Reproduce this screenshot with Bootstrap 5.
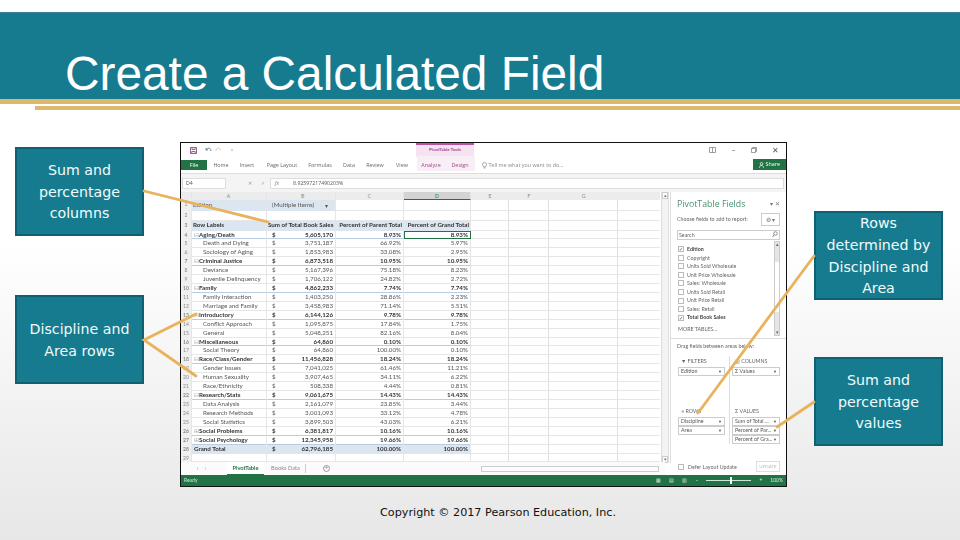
<!DOCTYPE html>
<html lang="en"><head><meta charset="utf-8"><title>Create a Calculated Field</title>
<link href="https://cdn.jsdelivr.net/npm/bootstrap@5.3.0/dist/css/bootstrap.min.css" rel="stylesheet">
<style>
html,body{margin:0;height:540px;width:960px;overflow:hidden}
.slide{position:relative;width:960px;height:540px;background:linear-gradient(#fff 0,#fff 45%,#e7e7e7 100%);padding-top:12px}
.hdr{height:87px;background:#177b90;border-top:1px solid #3f7f98;padding-left:65px;display:flex;align-items:flex-end}
.hdr h1{font:400 47.8px/54px "Liberation Sans",sans-serif;color:#fff;margin:0 0 -2px;letter-spacing:0}
.gold1{height:5px;background:#dcb86c}
.gold2{height:4px;background:#dcb86c;margin:2px 0 0 35px}
.note{position:absolute;width:129px;background:#177b90;border:2px solid #106073;font:14.2px/21.6px "DejaVu Sans",sans-serif;text-align:center;display:flex;align-items:center;justify-content:center;color:#f1fbfb;height:89px;padding-top:2px}
.n1{left:15px;top:147px}.n2{left:15px;top:295px}.n3{left:814px;top:211px}.n4{left:814px;top:357px}
.wires{position:absolute;left:0;top:0;z-index:3;pointer-events:none}
.copy{position:absolute;left:0;width:996px;top:506px;text-align:center;font:11.2px/14px "DejaVu Sans",sans-serif;color:#111}
.xl{position:absolute;left:180px;top:142px;width:607px;height:345px;background:#fff;border:1.5px solid #111;display:flex;flex-direction:column;font-family:Lato,sans-serif;color:#555;overflow:hidden}
.xl>*{filter:blur(.45px)}
.xtop{height:14px;display:flex;align-items:center;flex:none}
.qa{width:235px;padding-left:9px;display:flex;gap:8px;align-items:center}
.tools{width:58px;height:14px;background:#f5e3f1;border-top:2px solid #b9529f;font-size:4.5px;color:#a04a8c;text-align:center;line-height:10px;font-weight:700}
.wc{margin-left:auto;display:flex;gap:15px;padding-right:7px;align-items:center;font-size:8px;line-height:8px;color:#555}
.xtabs{height:15px;display:flex;align-items:center;font:5.4px/10px "Open Sans",sans-serif;color:#666;flex:none;position:relative}
.xfile{width:26px;height:10px;background:#217346;color:#fff;text-align:center}
.xtabs>span{flex:none;text-align:center}
.tpink{background:#f8eef6;height:15px;line-height:13px;color:#a04a8c;margin-top:-3px;padding-top:3px}
.xshare{margin-left:auto;width:33px;height:11px;background:#217346;color:#fff;line-height:11px}
.xfx{height:19px;flex:none;background:#f4f4f4;border-top:1px solid #ddd;display:flex;align-items:center;font:5.2px/9px "Open Sans",sans-serif;padding:0 2px 0 1px;margin-top:1px}
.xfx .nm{width:44px;height:11px;background:#fff;border:1px solid #ddd;padding-left:3px;line-height:9px}
.xfx .sym{width:44px;padding-left:22px;color:#999;white-space:nowrap;display:flex;gap:9px}
.xfx .val{flex:1;height:11px;background:#fff;border:1px solid #ddd;padding-left:23px;line-height:9px}
.xfx .val em{margin:0 14px 0 -19px;color:#777}
.xmain{flex:1;display:flex;min-height:0}
.xgrid{width:479px;flex:none;display:flex;flex-direction:column;background:linear-gradient(#e0e0e0,#e0e0e0) 327px 0/1px 100% no-repeat,linear-gradient(#e0e0e0,#e0e0e0) 367px 0/1px 100% no-repeat,linear-gradient(#e0e0e0,#e0e0e0) 436px 0/1px 100% no-repeat}
.xrow{display:grid;grid-template-columns:11px 75px 69px 68px 67px 1fr;height:8.93px;font-size:6.2px;line-height:8.4px;color:#555;flex:none;white-space:nowrap;background-image:linear-gradient(#e6e6e6,#e6e6e6);background-size:100% 1px;background-position:0 100%;background-repeat:no-repeat}
.xrow>span{display:block;overflow:hidden;padding:0 2px;text-align:right;border-right:1px solid #e6e6e6}
.xrow>span:nth-child(1){background:#f0f0f0;text-align:center;padding:0;color:#888;font-size:5px}
.xrow>span:nth-child(2){text-align:left;padding-left:1px}
.xrow>span:nth-child(3){display:flex;justify-content:space-between;padding:0 2px 0 5px}
.xrow>span:nth-child(6){border:0}
.xrow.top{background:#f3f3f3;height:8px;text-align:center;color:#888;font-size:5px}
.xrow.top>span{text-align:center!important;display:block!important;background:#ececec;line-height:8px}
.xrow.top>.cur{background:#d3d3d3;border-bottom:1px solid #217346;color:#217346}
.xrow.bd{font-weight:700;color:#333;background-image:linear-gradient(#b8cce4,#b8cce4),linear-gradient(#e6e6e6,#e6e6e6);background-size:290px 1px,100% 1px}
.xrow.bd>span:nth-child(2){padding-left:2px}
.tg{color:#aaa;font-weight:400}
.xrow .ind{padding-left:11px!important}
.xrow.bl>span:nth-child(n+2):nth-child(-n+5){background:#dce6f1}
.xrow.pg>span:nth-child(2),.xrow.pg>span:nth-child(3){background:#dce6f1}
.xrow.tall{height:10.500px;line-height:9.500px}
.xrow.sel>span:nth-child(5){outline:1px solid #217346;outline-offset:-1px}
.xrow.hd{font-weight:700;color:#333;height:9.5px}
.xrow.hd>span:nth-child(n+3){display:block;padding:0 1px;text-align:left}
.xrow.hd>span:nth-child(n+4){text-align:right}
.xbar{width:8px;flex:none;background:#f3f3f3;border-left:1px solid #ddd;border-right:1px solid #ddd;margin-left:1px;display:flex;flex-direction:column;justify-content:space-between;font-size:5px;line-height:7px;text-align:center;color:#777}
.xbar i{font-style:normal;display:block;background:#fff;border:1px solid #ccc;height:7px;line-height:5px}
.xpane{width:116px;flex:none;padding:5px 6px 0 6px;border-left:1px solid #ddd;margin-left:1px;font:5.3px/8.5px Lato,sans-serif;color:#666;position:relative;display:flex;flex-direction:column}
.xpane h6{font:400 8.8px/14px "Open Sans",sans-serif;color:#4c9070;margin:0;display:flex;justify-content:space-between;white-space:nowrap}
.xpane h6 small{font-size:6px;color:#777}
.pchoose{display:flex;justify-content:space-between;align-items:center;height:14px;margin-top:2px}
.pgear{width:19px;height:13px;border:1px solid #ccc;text-align:center;line-height:11px;font-size:6px;color:#777}
.psearch{height:10px;border:1px solid #ccc;margin:4px 0 4px 0;padding:0 1px;line-height:8px;display:flex;justify-content:space-between}
.plist{height:92px;display:flex;justify-content:space-between;flex:none;padding-left:1px}
.plist ul{list-style:none;margin:0;padding:1px 0 0;flex:1}
.plist li{height:8.55px;display:flex;align-items:center;gap:3px;white-space:nowrap}
.pbox{display:inline-block;width:6px;height:6px;border:1px solid #bbb;flex:none;font-size:5px;line-height:4px;color:#777}
.plist .act{font-weight:700;color:#444}
.pmore{margin-top:3px}
.pscroll{width:6px;border:1px solid #ccc;display:flex;flex-direction:column;justify-content:space-between;line-height:5px;text-align:center;font-size:5px;background:linear-gradient(#e5e5e5 20px,#fff 20px,#fff 70px,#e5e5e5 70px);margin-top:-3px}
.pdiv{border-top:1px solid #ddd;margin:2px -6px 0;padding:3px 6px 0}
.pareas{display:grid;grid-template-columns:47px 48px;grid-template-rows:50px 1fr;column-gap:7px;height:96px;position:relative;margin:5px 0 0 1px}
.pareas::before{content:"";position:absolute;left:51px;top:0;bottom:0;border-left:1px solid #ddd}
.parea{white-space:nowrap}
.parea>div:first-child{height:11px;line-height:10px;padding-left:3px}
.pitem{height:9.300px;border:1px solid #ccc;padding:0 2px;line-height:7px;display:flex;justify-content:space-between;color:#555}
.pitem i{font-style:normal;font-size:4px}
.pdefer{margin-top:17px;display:flex;align-items:center;gap:4px;height:11px;padding-left:1px}
.pdefer u{margin-left:auto;text-decoration:none;width:24px;height:11px;border:1px solid #ddd;text-align:center;color:#bbb;line-height:9px;font-size:4.5px}
.xsheet{height:13px;flex:none;display:flex;align-items:center;font-size:5.7px;color:#888;margin-top:-1px;width:484px;background:#fbfbfb}
.xsheet .ar{width:46px;padding-left:16px;letter-spacing:6px;font-size:5px}
.xsheet .on{width:37px;text-align:center;font-weight:700;color:#217346;background:#fff;border-bottom:1.5px solid #217346;height:13px;line-height:12px;margin-right:2px}
.xsheet .off{width:40px;text-align:center;border-right:1px solid #ccc}
.xsheet .add{width:7px;height:7px;border:1px solid #999;border-radius:50%;margin-left:17px;text-align:center;line-height:4px;font-size:6px}
.xsheet .hs{margin-left:auto;margin-right:6px;width:178px;height:6px;border:1px solid #ccc;background:#fff}
.xstat{height:11px;flex:none;background:#217346;color:#cfe5d8;font-size:5px;line-height:11px;padding:0 3px;display:flex;align-items:center}
.xstat .rgt{margin-left:auto;display:flex;align-items:center;gap:8px;color:#dfeee6}
.xzoom{width:45px;height:1px;background:#cfe5d8;position:relative;display:block}
.xzoom::after{content:"";position:absolute;left:24px;top:-3px;height:7px;width:1.5px;background:#fff}
</style></head><body>
<div class="slide">
<div class="hdr"><h1>Create a Calculated Field</h1></div>
<div class="gold1"></div><div class="gold2"></div>

<div class="note n1"><span>Sum and<br>percentage<br>columns</span></div>
<div class="note n2"><span>Discipline and<br>Area rows</span></div>
<div class="note n3"><span>Rows<br>determined by<br>Discipline and<br>Area</span></div>
<div class="note n4"><span>Sum and<br>percentage<br>values</span></div>

<div class="xl">
 <div class="xtop">
  <div class="qa"><svg width="7" height="7" viewBox="0 0 7 7"><path d="M.5.5h6v6h-6z M2 .5v2h3v-2 M1.8 6.5v-2h3.4v2" fill="none" stroke="#8a4f82" stroke-width=".9"/></svg>
  <svg width="30" height="6" viewBox="0 0 30 6"><path d="M1 3c2-3 5-2 5 1M1 1v2h2" fill="none" stroke="#3a6f96" stroke-width=".8"/><path d="M16 3c-2-3-5-2-5 1" fill="none" stroke="#bbb" stroke-width=".8"/><circle cx="27" cy="3" r=".8" fill="#999"/></svg></div>
  <div class="tools">PivotTable Tools</div>
  <div class="wc"><svg width="7" height="6" viewBox="0 0 7 6"><path d="M.5.5h6v5h-6zM3.5.5v5" fill="none" stroke="#777" stroke-width=".7"/></svg><span>–</span><svg width="6" height="6" viewBox="0 0 6 6"><path d="M.5 1.5h4v4h-4zM1.5 1.5v-1h4v4h-1" fill="none" stroke="#777" stroke-width=".7"/></svg><span>✕</span></div>
 </div>
 <div class="xtabs">
  <span class="xfile">File</span>
  <span style="width:28px">Home</span><span style="width:24px">Insert</span><span style="width:46px">Page Layout</span><span style="width:30px">Formulas</span><span style="width:28px">Data</span><span style="width:24px">Review</span><span style="width:30px">View</span>
  <span class="tpink" style="width:28px">Analyze</span><span class="tpink" style="width:30px">Design</span>
  <span style="padding-left:7px;color:#888"><svg width="5" height="7" viewBox="0 0 5 7"><path d="M.5 2.500a2 2 0 0 1 4 0c0 1-1 1.300-1 2.500h-2c0-1.200-1-1.500-1-2.500zM1.500 6h2" fill="none" stroke="#888" stroke-width=".7"/></svg> Tell me what you want to do...</span>
  <span class="xshare"><svg width="5" height="6" viewBox="0 0 5 6"><circle cx="2.500" cy="1.800" r="1.300" fill="none" stroke="#fff" stroke-width=".7"/><path d="M.3 5.800c0-3 4.400-3 4.400 0" fill="none" stroke="#fff" stroke-width=".7"/></svg> Share</span>
 </div>
 <div class="xfx"><span class="nm">D4</span><span class="sym"><span>✕</span><span>✓</span></span><span class="val"><em class="fst-italic">fx</em>8.92597217490203%</span></div>
 <div class="xmain">
  <div class="xgrid">
   <div class="xrow top"><span></span><span>A</span><span>B</span><span>C</span><span class="cur">D</span><span style="display:grid!important;grid-template-columns:38px 40px 69px 1fr;padding:0"><b class="fw-normal">E</b><b class="fw-normal">F</b><b class="fw-normal">G</b><b></b></span></div>
   <div class="xrow pg tall"><span>1</span><span>Edition</span><span>(Multiple Items)<em class="fst-normal border px-1">▾</em></span><span></span><span></span><span></span></div>
   <div class="xrow tall"><span>2</span><span></span><span></span><span></span><span></span><span></span></div>
   <div class="xrow hd bl"><span>3</span><span>Row Labels</span><span>Sum of Total Book Sales</span><span>Percent of Parent Total</span><span>Percent of Grand Total</span><span></span></div>
   <div class="xrow bd sel"><span>4</span><span><i class="tg fst-normal">⊟</i>Aging/Death</span><span>$<em class="fst-normal">5,605,170</em></span><span>8.93%</span><span>8.93%</span><span></span></div>
   <div class="xrow"><span>5</span><span class="ind">Death and Dying</span><span>$<em class="fst-normal">3,751,187</em></span><span>66.92%</span><span>5.97%</span><span></span></div>
   <div class="xrow"><span>6</span><span class="ind">Sociology of Aging</span><span>$<em class="fst-normal">1,853,983</em></span><span>33.08%</span><span>2.95%</span><span></span></div>
   <div class="xrow bd"><span>7</span><span><i class="tg fst-normal">⊟</i>Criminal Justice</span><span>$<em class="fst-normal">6,873,518</em></span><span>10.95%</span><span>10.95%</span><span></span></div>
   <div class="xrow"><span>8</span><span class="ind">Deviance</span><span>$<em class="fst-normal">5,167,396</em></span><span>75.18%</span><span>8.23%</span><span></span></div>
   <div class="xrow"><span>9</span><span class="ind">Juvenile Delinquency</span><span>$<em class="fst-normal">1,706,122</em></span><span>24.82%</span><span>2.72%</span><span></span></div>
   <div class="xrow bd"><span>10</span><span><i class="tg fst-normal">⊟</i>Family</span><span>$<em class="fst-normal">4,862,233</em></span><span>7.74%</span><span>7.74%</span><span></span></div>
   <div class="xrow"><span>11</span><span class="ind">Family Interaction</span><span>$<em class="fst-normal">1,403,250</em></span><span>28.86%</span><span>2.23%</span><span></span></div>
   <div class="xrow"><span>12</span><span class="ind">Marriage and Family</span><span>$<em class="fst-normal">3,458,983</em></span><span>71.14%</span><span>5.51%</span><span></span></div>
   <div class="xrow bd"><span>13</span><span><i class="tg fst-normal">⊟</i>Introductory</span><span>$<em class="fst-normal">6,144,126</em></span><span>9.78%</span><span>9.78%</span><span></span></div>
   <div class="xrow"><span>14</span><span class="ind">Conflict Approach</span><span>$<em class="fst-normal">1,095,875</em></span><span>17.84%</span><span>1.75%</span><span></span></div>
   <div class="xrow"><span>15</span><span class="ind">General</span><span>$<em class="fst-normal">5,048,251</em></span><span>82.16%</span><span>8.04%</span><span></span></div>
   <div class="xrow bd"><span>16</span><span><i class="tg fst-normal">⊟</i>Miscellaneous</span><span>$<em class="fst-normal">64,860</em></span><span>0.10%</span><span>0.10%</span><span></span></div>
   <div class="xrow"><span>17</span><span class="ind">Social Theory</span><span>$<em class="fst-normal">64,860</em></span><span>100.00%</span><span>0.10%</span><span></span></div>
   <div class="xrow bd"><span>18</span><span><i class="tg fst-normal">⊟</i>Race/Class/Gender</span><span>$<em class="fst-normal">11,456,828</em></span><span>18.24%</span><span>18.24%</span><span></span></div>
   <div class="xrow"><span>19</span><span class="ind">Gender Issues</span><span>$<em class="fst-normal">7,041,025</em></span><span>61.46%</span><span>11.21%</span><span></span></div>
   <div class="xrow"><span>20</span><span class="ind">Human Sexuality</span><span>$<em class="fst-normal">3,907,465</em></span><span>34.11%</span><span>6.22%</span><span></span></div>
   <div class="xrow"><span>21</span><span class="ind">Race/Ethnicity</span><span>$<em class="fst-normal">508,338</em></span><span>4.44%</span><span>0.81%</span><span></span></div>
   <div class="xrow bd"><span>22</span><span><i class="tg fst-normal">⊟</i>Research/Stats</span><span>$<em class="fst-normal">9,061,675</em></span><span>14.43%</span><span>14.43%</span><span></span></div>
   <div class="xrow"><span>23</span><span class="ind">Data Analysis</span><span>$<em class="fst-normal">2,161,079</em></span><span>23.85%</span><span>3.44%</span><span></span></div>
   <div class="xrow"><span>24</span><span class="ind">Research Methods</span><span>$<em class="fst-normal">3,001,093</em></span><span>33.12%</span><span>4.78%</span><span></span></div>
   <div class="xrow"><span>25</span><span class="ind">Social Statistics</span><span>$<em class="fst-normal">3,899,503</em></span><span>43.03%</span><span>6.21%</span><span></span></div>
   <div class="xrow bd"><span>26</span><span><i class="tg fst-normal">⊞</i>Social Problems</span><span>$<em class="fst-normal">6,381,817</em></span><span>10.16%</span><span>10.16%</span><span></span></div>
   <div class="xrow bd"><span>27</span><span><i class="tg fst-normal">⊞</i>Social Psychology</span><span>$<em class="fst-normal">12,345,958</em></span><span>19.66%</span><span>19.66%</span><span></span></div>
   <div class="xrow bd bl"><span>28</span><span>Grand Total</span><span>$<em class="fst-normal">62,796,185</em></span><span>100.00%</span><span>100.00%</span><span></span></div>
   <div class="xrow"><span>29</span><span></span><span></span><span></span><span></span><span></span></div>
  </div>
  <div class="xbar"><i>▴</i><i>▾</i></div>
  <div class="xpane">
   <h6>PivotTable Fields <small>▾ ✕</small></h6>
   <div class="pchoose"><span>Choose fields to add to report:</span><span class="pgear">⚙ ▾</span></div>
   <div class="psearch"><span>Search</span><svg width="6" height="7" viewBox="0 0 6 7"><circle cx="3.500" cy="2.500" r="1.800" fill="none" stroke="#666" stroke-width=".7"/><path d="M2.200 3.800.5 6" stroke="#666" stroke-width=".8"/></svg></div>
   <div class="plist"><ul>
    <li class="act"><span class="pbox">✓</span>Edition</li>
    <li><span class="pbox"></span>Copyright</li>
    <li><span class="pbox"></span>Units Sold Wholesale</li>
    <li><span class="pbox"></span>Unit Price Wholesale</li>
    <li><span class="pbox"></span>Sales: Wholesale</li>
    <li><span class="pbox"></span>Units Sold Retail</li>
    <li><span class="pbox"></span>Unit Price Retail</li>
    <li><span class="pbox"></span>Sales: Retail</li>
    <li class="act"><span class="pbox">✓</span>Total Book Sales</li>
    <li class="pmore">MORE TABLES...</li>
   </ul><div class="pscroll"><span>▴</span><span>▾</span></div></div>
   <div class="pdiv">Drag fields between areas below:</div>
   <div class="pareas">
    <div class="parea"><div>▼ FILTERS</div><div class="pitem">Edition<i>▼</i></div></div>
    <div class="parea"><div>▥ COLUMNS</div><div class="pitem">Σ Values<i>▼</i></div></div>
    <div class="parea"><div>≡ ROWS</div><div class="pitem">Discipline<i>▼</i></div><div class="pitem">Area<i>▼</i></div></div>
    <div class="parea"><div>Σ VALUES</div><div class="pitem">Sum of Total ...<i>▼</i></div><div class="pitem">Percent of Par...<i>▼</i></div><div class="pitem">Percent of Gra...<i>▼</i></div></div>
   </div>
   <div class="pdefer"><span class="pbox"></span>Defer Layout Update<u>UPDATE</u></div>
  </div>
 </div>
 <div class="xsheet"><span class="ar">‹›</span><span class="on">PivotTable</span><span class="off">Books Data</span><span class="add">+</span><span class="hs"></span></div>
 <div class="xstat"><span>Ready</span><span class="rgt"><span>▦</span><span>▤</span><span>▥</span><span>–</span><span class="xzoom"></span><span>+</span><span>100%</span></span></div>
</div>

<svg class="wires" width="960" height="540" viewBox="0 0 960 540"><g stroke="#e9b25c" stroke-width="2.800" fill="none" stroke-linecap="round"><path d="M144 191 268 222"/><path d="M196 314 144 340 196 376"/><path d="M814 256 698 413"/><path d="M814 402 777 427"/></g></svg>

<div class="copy">Copyright © 2017 Pearson Education, Inc.</div>
</div>
<script src="https://cdn.jsdelivr.net/npm/bootstrap@5.3.0/dist/js/bootstrap.bundle.min.js"></script>
</body></html>
